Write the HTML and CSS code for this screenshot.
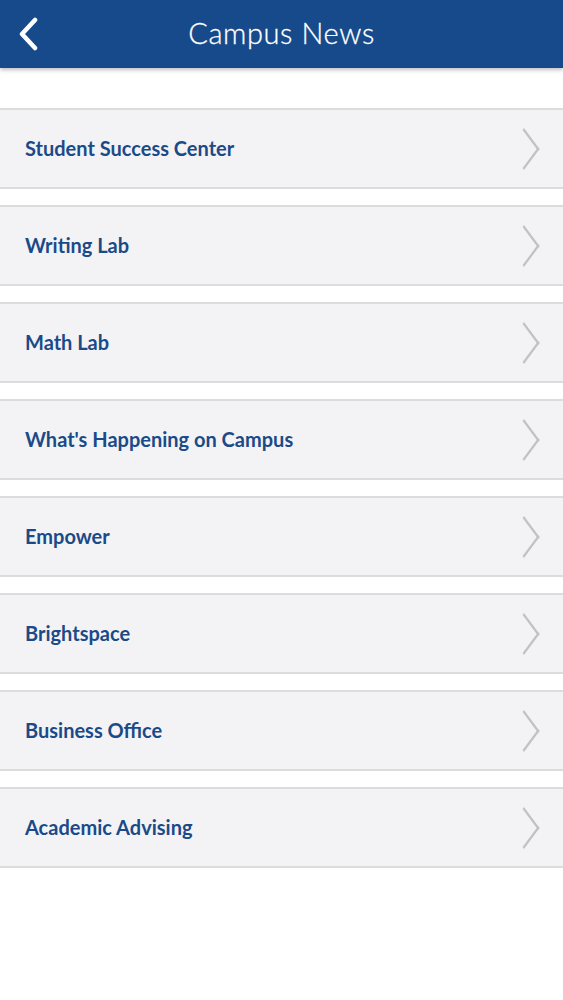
FILE: index.html
```html
<!DOCTYPE html>
<html lang="en">
<head>
    <meta charset="UTF-8">
    <meta name="viewport" content="width=device-width, initial-scale=1.0">
    <title>Campus News</title>
    <link rel="stylesheet" href="styles.css">
</head>
<body>
    <div class="header">
        <a class="back" href="#">
            <svg width="22" height="34" viewBox="0 0 22 34">
                <polyline points="18,3 5,17 18,31" fill="none" stroke="#fff" stroke-width="4.5" stroke-linecap="round" stroke-linejoin="round"/>
            </svg>
        </a>
        <h1 class="title">Campus News</h1>
    </div>

    <ul class="news-list">
        <li class="news-item"><span>Student Success Center</span><i class="chev"></i></li>
        <li class="news-item"><span>Writing Lab</span><i class="chev"></i></li>
        <li class="news-item"><span>Math Lab</span><i class="chev"></i></li>
        <li class="news-item"><span>What's Happening on Campus</span><i class="chev"></i></li>
        <li class="news-item"><span>Empower</span><i class="chev"></i></li>
        <li class="news-item"><span>Brightspace</span><i class="chev"></i></li>
        <li class="news-item"><span>Business Office</span><i class="chev"></i></li>
        <li class="news-item"><span>Academic Advising</span><i class="chev"></i></li>
    </ul>
</body>
</html>
```

FILE: styles.css
```css
body {
    margin: 0;
    background: #fff;
    font-family: Lato, "Liberation Sans", sans-serif;
}

.header {
    height: 68px;
    background: #174a8b;
    display: flex;
    align-items: center;
    justify-content: center;
    position: relative;
    box-shadow: 0 2px 4px rgba(0, 0, 0, 0.25);
}

.back {
    position: absolute;
    left: 17px;
    top: 17px;
    display: block;
    line-height: 0;
}

.title {
    margin: 0 0 4px 0;
    color: #fff;
    font-weight: 300;
    font-size: 29px;
    letter-spacing: 0.6px;
    -webkit-text-stroke: 0.3px #fff;
}

.news-list {
    list-style: none;
    margin: 40px 0 0 0;
    padding: 0;
    display: flex;
    flex-direction: column;
    gap: 16px;
}

.news-item {
    height: 77px;
    background: #f3f3f5;
    border-top: 2px solid #dcdcde;
    border-bottom: 2px solid #dcdcde;
    display: flex;
    align-items: center;
    justify-content: space-between;
    padding: 0 22px 0 25px;
    color: #1b4a88;
    font-weight: 700;
    font-size: 20px;
}

.news-item span {
    margin-bottom: 2px;
}

/* flecha gris a la derecha */
.chev {
    width: 20px;
    height: 20px;
    border-top: 2px solid #c2c2c4;
    border-right: 2px solid #c2c2c4;
    transform: translateX(-6px) scaleY(1.35) rotate(45deg);
}
```
